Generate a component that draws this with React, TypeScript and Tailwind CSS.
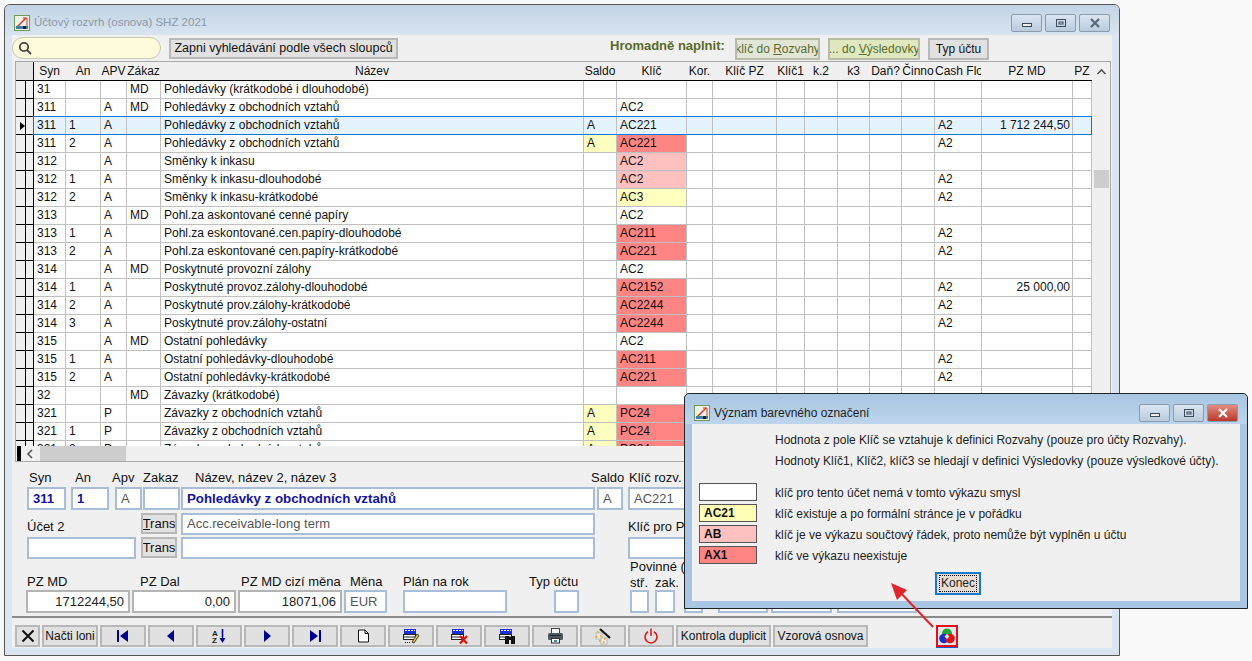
import { ReactNode } from 'react';

// column widths in the data grid, same order as the header labels
const gridCols =
  'grid grid-cols-[9px_9px_32px_35px_26px_34px_423px_33px_70px_26px_64px_28px_33px_32px_32px_33px_47px_91px_19px]';

const headers = ['Syn', 'An', 'APV', 'Zákaz', 'Název', 'Saldo', 'Klíč', 'Kor.', 'Klíč PZ', 'Klíč1', 'k.2', 'k3', 'Daň?', 'Činno', 'Cash Flo', 'PZ MD', 'PZ'];

type Tone = 'y' | 'p' | 'r' | undefined;

interface Row {
  syn: string;
  an?: string;
  apv?: string;
  zak?: string;
  name: string;
  saldo?: string;
  saldoTone?: Tone;
  key?: string;
  tone?: Tone;
  cash?: string;
  pz?: string;
  selected?: boolean;
}

const rows: Row[] = [
  { syn: '31', zak: 'MD', name: 'Pohledávky (krátkodobé i dlouhodobé)' },
  { syn: '311', apv: 'A', zak: 'MD', name: 'Pohledávky z obchodních vztahů', key: 'AC2' },
  { syn: '311', an: '1', apv: 'A', name: 'Pohledávky z obchodních vztahů', saldo: 'A', key: 'AC221', cash: 'A2', pz: '1 712 244,50', selected: true },
  { syn: '311', an: '2', apv: 'A', name: 'Pohledávky z obchodních vztahů', saldo: 'A', saldoTone: 'y', key: 'AC221', tone: 'r', cash: 'A2' },
  { syn: '312', apv: 'A', name: 'Směnky k inkasu', key: 'AC2', tone: 'p' },
  { syn: '312', an: '1', apv: 'A', name: 'Směnky k inkasu-dlouhodobé', key: 'AC2', tone: 'p', cash: 'A2' },
  { syn: '312', an: '2', apv: 'A', name: 'Směnky k inkasu-krátkodobé', key: 'AC3', tone: 'y', cash: 'A2' },
  { syn: '313', apv: 'A', zak: 'MD', name: 'Pohl.za askontované cenné papíry', key: 'AC2' },
  { syn: '313', an: '1', apv: 'A', name: 'Pohl.za eskontované.cen.papíry-dlouhodobé', key: 'AC211', tone: 'r', cash: 'A2' },
  { syn: '313', an: '2', apv: 'A', name: 'Pohl.za eskontované cen.papíry-krátkodobé', key: 'AC221', tone: 'r', cash: 'A2' },
  { syn: '314', apv: 'A', zak: 'MD', name: 'Poskytnuté provozní zálohy', key: 'AC2' },
  { syn: '314', an: '1', apv: 'A', name: 'Poskytnuté provoz.zálohy-dlouhodobé', key: 'AC2152', tone: 'r', cash: 'A2', pz: '25 000,00' },
  { syn: '314', an: '2', apv: 'A', name: 'Poskytnuté prov.zálohy-krátkodobé', key: 'AC2244', tone: 'r', cash: 'A2' },
  { syn: '314', an: '3', apv: 'A', name: 'Poskytnuté prov.zálohy-ostatní', key: 'AC2244', tone: 'r', cash: 'A2' },
  { syn: '315', apv: 'A', zak: 'MD', name: 'Ostatní pohledávky', key: 'AC2' },
  { syn: '315', an: '1', apv: 'A', name: 'Ostatní pohledávky-dlouhodobé', key: 'AC211', tone: 'r', cash: 'A2' },
  { syn: '315', an: '2', apv: 'A', name: 'Ostatní pohledávky-krátkodobé', key: 'AC221', tone: 'r', cash: 'A2' },
  { syn: '32', zak: 'MD', name: 'Závazky (krátkodobé)' },
  { syn: '321', apv: 'P', name: 'Závazky z obchodních vztahů', saldo: 'A', saldoTone: 'y', key: 'PC24', tone: 'r' },
  { syn: '321', an: '1', apv: 'P', name: 'Závazky z obchodních vztahů', saldo: 'A', saldoTone: 'y', key: 'PC24', tone: 'r' },
  { syn: '321', an: '2', apv: 'P', name: 'Závazky z obchodních vztahů', saldo: 'A', saldoTone: 'y', key: 'PC24', tone: 'r' },
];

const toneClass = (tone: Tone) => {
  if (tone === 'y') return 'bg-[#ffffc0]';
  if (tone === 'p') return 'bg-[#ffc0c0]';
  if (tone === 'r') return 'bg-[#ff8484]';
  return '';
};

const Cell = ({ children, className = '' }: { children?: ReactNode; className?: string }) => (
  <div className={`h-[18px] border-r border-b border-[#c0c0c0] pl-[3px] leading-[17px] overflow-hidden whitespace-nowrap ${className}`}>
    {children}
  </div>
);

const GridRow = ({ row }: { row: Row }) => {
  const sel = row.selected;
  const lines = sel ? 'bg-[#e5f3ff]' : '';
  return (
    <div className={`${gridCols} relative`}>
      <div className="h-[18px] border-b border-black bg-[#f0f0f0]" />
      <div className="h-[18px] border-x border-b border-black bg-[#f0f0f0] relative">
        {sel && <div className="absolute left-[-6px] top-[5px] w-0 h-0 border-y-[4px] border-y-transparent border-l-[5px] border-l-black" />}
      </div>
      <Cell className={lines}>{row.syn}</Cell>
      <Cell className={lines}>{row.an}</Cell>
      <Cell className={lines}>{row.apv}</Cell>
      <Cell className={lines}>{row.zak}</Cell>
      <Cell className={lines}>{row.name}</Cell>
      <Cell className={`${lines} ${toneClass(row.saldoTone)}`}>{row.saldo}</Cell>
      <Cell className={`${lines} ${toneClass(row.tone)}`}>{row.key}</Cell>
      <Cell className={lines} />
      <Cell className={lines} />
      <Cell className={lines} />
      <Cell className={lines} />
      <Cell className={lines} />
      <Cell className={lines} />
      <Cell className={lines} />
      <Cell className={lines}>{row.cash}</Cell>
      <Cell className={`${lines} text-right pr-[2px]`}>{row.pz}</Cell>
      <Cell className={lines} />
      {sel && <div className="absolute left-[17px] right-0 top-[-1px] h-[19px] border border-[#0078d7] pointer-events-none" />}
    </div>
  );
};

const Field = ({ className = '', children }: { className?: string; children?: ReactNode }) => (
  <div className={`h-[23px] border-2 border-[#a9bed6] bg-white px-[4px] leading-[19px] text-[13px] text-[#555] whitespace-nowrap overflow-hidden ${className}`}>
    {children}
  </div>
);

const Num = ({ className = '', children }: { className?: string; children?: ReactNode }) => (
  <div className={`h-[23px] border-2 border-[#b4b4b4] bg-white px-[4px] text-right leading-[19px] text-[13px] text-[#222] ${className}`}>
    {children}
  </div>
);

const ToolButton = ({ children, className = 'w-[46px]' }: { children?: ReactNode; className?: string }) => (
  <div className={`h-[22px] border-2 border-[#b8b8b8] bg-[#e1e1e1] flex items-center justify-center text-[12px] text-[#111] whitespace-nowrap overflow-hidden ${className}`}>
    {children}
  </div>
);

const AppIcon = () => (
  <svg width="16" height="16" viewBox="0 0 16 16">
    <rect x="0.5" y="0.5" width="15" height="15" fill="#eef3e6" stroke="#6d9a5a" />
    <path d="M2 13 L12 3" stroke="#d8342c" strokeWidth="1.5" />
    <path d="M9 3 L13 3 L13 12" stroke="#d8342c" fill="none" />
    <rect x="2" y="11" width="12" height="3" fill="#3f7fa8" />
    <rect x="9" y="11" width="3" height="3" fill="#222" />
  </svg>
);

const WinButton = ({ kind, red = false }: { kind: 'min' | 'max' | 'close'; red?: boolean }) => (
  <div
    className={`w-[31px] h-[18px] rounded-[2px] border border-[#8a9bad] flex items-center justify-center ${
      red ? 'bg-gradient-to-b from-[#e58b80] to-[#b8372a]' : 'bg-gradient-to-b from-[#dbe6f1] to-[#b9cbdd]'
    }`}
  >
    <svg width="14" height="10" viewBox="0 0 14 10">
      {kind === 'min' && <rect x="2.5" y="5.5" width="9" height="3" fill="#f2f5f8" stroke="#3d4a57" />}
      {kind === 'max' && (
        <>
          <rect x="2.5" y="1.5" width="9" height="7" fill="none" stroke="#3d4a57" />
          <rect x="5" y="4" width="4" height="2" fill="none" stroke="#3d4a57" />
        </>
      )}
      {kind === 'close' && <path d="M3 1 L11 9 M11 1 L3 9" stroke={red ? '#fff' : '#5a6876'} strokeWidth="2.2" />}
    </svg>
  </div>
);

const NavIcon = ({ d, bar }: { d: string; bar?: number }) => (
  <svg width="14" height="14" viewBox="0 0 14 14">
    <path d={d} fill="#00008b" />
    {bar !== undefined && <rect x={bar} y="1" width="2" height="12" fill="#00008b" />}
  </svg>
);

// blue-headed table used by the edit/delete/find buttons
const SheetIcon = ({ children }: { children?: ReactNode }) => (
  <svg width="18" height="17" viewBox="0 0 18 17">
    <rect x="2" y="1" width="12" height="5" fill="#1c2fd0" />
    <path d="M3 2.5 h2 M6 2.5 h2 M9 2.5 h2 M12 2.5 h1" stroke="#fff" strokeWidth="1" />
    <rect x="1.5" y="6.5" width="12" height="5" fill="#fff" stroke="#222" />
    <path d="M1 9 h13" stroke="#222" />
    {children}
  </svg>
);

const App = () => (
  <div
    className="relative w-[1252px] h-[661px] overflow-hidden bg-[#f9f9f9] pl-[4px] pt-[4px] text-[12px] text-[#111]"
    style={{ fontFamily: '"Liberation Sans", Arial, sans-serif' }}
  >
    {/* main window */}
    <div className="w-[1116px] h-[652px] border border-[#555] rounded-t-[6px] bg-[#dbe6f2] flex flex-col px-[7px] pb-[7px] overflow-hidden">
      <div className="h-[30px] -mx-[7px] px-[9px] pt-[6px] shrink-0 flex items-center bg-gradient-to-b from-[#c3d4e5] to-[#d8e4f0]">
        <AppIcon />
        <span className="ml-[4px] text-[11.5px] text-[#8a99a8]">Účtový rozvrh (osnova) SHZ 2021</span>
        <div className="ml-auto flex gap-[3px]">
          <WinButton kind="min" />
          <WinButton kind="max" />
          <WinButton kind="close" />
        </div>
      </div>

      <div className="flex-1 bg-[#f0f0f0] flex flex-col min-h-0">
        {/* search row */}
        <div className="h-[26px] shrink-0 flex items-center">
          <div className="w-[149px] h-[22px] rounded-full border border-[#c9c9b4] bg-[#fdfbdc] flex items-center pl-[5px]">
            <svg width="14" height="14" viewBox="0 0 14 14" fill="none" stroke="#444" strokeWidth="1.8">
              <circle cx="6" cy="6" r="4.2" />
              <path d="M9 9 L13 13" />
            </svg>
          </div>
          <div className="ml-[8px] w-[229px] h-[21px] border-2 border-[#b8b8b8] bg-[#e1e1e1] flex items-center justify-center text-[12.5px]">
            Zapni vyhledávání podle všech sloupců
          </div>
          <span className="ml-[212px] w-[118px] font-bold text-[#5a6a2a] text-[13px] -mt-[4px] whitespace-nowrap">Hromadně naplnit:</span>
          <div className="ml-[7px] w-[85px] h-[22px] mt-[2px] border-2 border-[#b8bca8] bg-[#e2e6d6] text-[#5b6b2d] flex items-center justify-center whitespace-nowrap overflow-hidden">
            klíč do&nbsp;<u>R</u>ozvahy
          </div>
          <div className="ml-[8px] w-[92px] h-[22px] mt-[2px] border-2 border-[#b8bca8] bg-[#dfe8bf] text-[#5b6b2d] flex items-center justify-center whitespace-nowrap overflow-hidden">
            ... do&nbsp;<u>V</u>ýsledovky
          </div>
          <div className="ml-[8px] w-[61px] h-[22px] mt-[2px] border-2 border-[#b8b8b8] bg-[#e1e1e1] flex items-center justify-center">
            Typ účtu
          </div>
        </div>

        {/* data grid */}
        <div className="ml-[3px] mr-[1px] h-[401px] shrink-0 border border-[#a8a8a8] flex flex-col bg-white overflow-hidden relative">
          <div className="flex-1 min-h-0 flex">
            <div className="w-[1076px] shrink-0 overflow-hidden">
              <div className={`${gridCols} h-[19px] border-b border-black bg-[#f0f0f0]`}>
                <div className="col-span-2 bg-[#e4e4e4] border-r border-black" />
                {headers.map((h) => (
                  <div key={h} className="text-center leading-[18px] whitespace-nowrap overflow-hidden text-[#111] border-r border-transparent">
                    {h}
                  </div>
                ))}
              </div>
              {rows.map((row, i) => (
                <GridRow key={i} row={row} />
              ))}
            </div>
            <div className="w-[18px] shrink-0 bg-[#f0f0f0] flex flex-col items-center">
              <svg width="11" height="8" viewBox="0 0 11 8" className="mt-[6px]">
                <path d="M1.5 6 L5.5 2 L9.5 6" fill="none" stroke="#555" strokeWidth="1.6" />
              </svg>
              <div className="w-[15px] h-[18px] mt-[94px] bg-[#cdcdcd]" />
            </div>
          </div>
          <div className="h-[15px] shrink-0 bg-[#f0f0f0] flex items-center relative">
            <div className="w-[4px] h-[15px] ml-[1px] bg-black" />
            <svg width="8" height="10" viewBox="0 0 8 10" className="ml-[5px]">
              <path d="M6 1 L2 5 L6 9" fill="none" stroke="#555" strokeWidth="1.6" />
            </svg>
            <div className="w-[86px] h-[15px] ml-[6px] bg-[#cdcdcd]" />
          </div>
        </div>

        {/* detail panel */}
        <div className="flex-1 min-h-0 flex flex-col border-b-2 border-[#8a8a8a] pl-[15px] text-[13px] overflow-hidden">
          <div className="flex h-[17px] mt-[7px] leading-[17px] whitespace-nowrap">
            <span className="ml-[2px] w-[46px]">Syn</span>
            <span className="w-[37px]">An</span>
            <span className="w-[31px]">Apv</span>
            <span className="w-[52px]">Zakaz</span>
            <span className="w-[396px]">Název, název 2, název 3</span>
            <span className="w-[38px]">Saldo</span>
            <span>Klíč rozv.</span>
          </div>
          <div className="flex h-[23px] mt-[1px]">
            <Field className="w-[39px] bg-[#fdfde0] font-bold text-[#14149a]">311</Field>
            <Field className="ml-[5px] w-[38px] bg-[#fdfde0] font-bold text-[#14149a]">1</Field>
            <Field className="ml-[6px] w-[27px]">A</Field>
            <Field className="ml-[1px] w-[37px]" />
            <Field className="ml-[1px] w-[414px] bg-[#fdfde0] font-bold text-[#14149a] !text-[13.3px]">Pohledávky z obchodních vztahů</Field>
            <Field className="ml-[2px] w-[26px]">A</Field>
            <Field className="ml-[5px] w-[80px]">AC221</Field>
          </div>
          <div className="flex h-[22px] mt-[3px]">
            <span className="mt-[5px] w-[114px] leading-[18px]">Účet 2</span>
            <ToolButton className="w-[36px] text-[13px] !h-[21px]">
              <span>
                <u>T</u>rans
              </span>
            </ToolButton>
            <Field className="ml-[4px] w-[414px] !h-[22px] !leading-[18px]">Acc.receivable-long term</Field>
            <span className="ml-[33px] mt-[5px] leading-[18px]">Klíč pro PZ</span>
          </div>
          <div className="flex h-[22px] mt-[2px]">
            <Field className="w-[109px] !h-[22px]" />
            <ToolButton className="ml-[5px] w-[36px] text-[13px] !h-[21px]">Trans</ToolButton>
            <Field className="ml-[4px] w-[414px] !h-[22px]" />
            <Field className="ml-[33px] w-[80px] !h-[22px]" />
          </div>
          <div className="flex items-end h-[32px] whitespace-nowrap">
            <span className="w-[113px]">PZ MD</span>
            <span className="w-[101px]">PZ Dal</span>
            <span className="w-[109px]">PZ MD cizí měna</span>
            <span className="w-[53px]">Měna</span>
            <span className="w-[126px]">Plán na rok</span>
            <span className="w-[101px]">Typ účtu</span>
            <div className="flex flex-col leading-[16px]">
              <span>Povinné (A</span>
              <div className="flex">
                <span className="w-[25px]">stř.</span>
                <span>zak.</span>
              </div>
            </div>
          </div>
          <div className="flex h-[23px] -mt-[1px] -ml-[1px]">
            <Num className="w-[104px]">1712244,50</Num>
            <Num className="ml-[2px] w-[104px]">0,00</Num>
            <Num className="ml-[2px] w-[104px]">18071,06</Num>
            <Field className="ml-[2px] w-[43px]">EUR</Field>
            <Field className="ml-[16px] w-[104px]" />
            <Field className="ml-[47px] w-[25px]" />
            <Field className="ml-[51px] w-[19px]" />
            <Field className="ml-[6px] w-[20px]" />
            <Field className="ml-[9px] w-[19px]" />
            <Field className="ml-[15px] w-[50px]" />
            <Field className="ml-[3px] w-[61px]" />
            <Field className="ml-[5px] w-[80px]" />
          </div>
        </div>

        {/* toolbar */}
        <div className="h-[30px] shrink-0 flex items-center gap-[2px] pl-[3px] pt-[7px] pb-[1px]">
          <ToolButton className="w-[25px]">
            <svg width="14" height="14" viewBox="0 0 14 14">
              <path d="M1.5 1.5 L12.5 12.5 M12.5 1.5 L1.5 12.5" stroke="#111" strokeWidth="2" />
            </svg>
          </ToolButton>
          <ToolButton className="w-[56px] text-[12.5px]">Načti loni</ToolButton>
          <ToolButton><NavIcon d="M12 1 L4 7 L12 13 Z" bar={1} /></ToolButton>
          <ToolButton><NavIcon d="M10 1 L3 7 L10 13 Z" /></ToolButton>
          <ToolButton>
            <svg width="16" height="16" viewBox="0 0 16 16">
              <text x="1" y="7.5" fontSize="8" fontWeight="bold" fill="#222" fontFamily="Liberation Sans">A</text>
              <text x="1" y="15" fontSize="8" fontWeight="bold" fill="#222" fontFamily="Liberation Sans">Z</text>
              <path d="M11.5 1 V12" stroke="#00008b" strokeWidth="1.6" />
              <path d="M8.5 10 L14.5 10 L11.5 15 Z" fill="#00008b" />
            </svg>
          </ToolButton>
          <ToolButton><NavIcon d="M4 1 L11 7 L4 13 Z" /></ToolButton>
          <ToolButton><NavIcon d="M2 1 L10 7 L2 13 Z" bar={11} /></ToolButton>
          <ToolButton>
            <svg width="13" height="14" viewBox="0 0 13 14">
              <path d="M1.5 1 H8 L11.5 4.5 V13 H1.5 Z M8 1 V4.5 H11.5" fill="#fff" stroke="#111" />
            </svg>
          </ToolButton>
          <ToolButton>
            <SheetIcon>
              <path d="M10 14 L15 6 L17 7.5 L12 15 Z" fill="#e8c030" stroke="#222" strokeWidth="0.8" />
              <path d="M3 14.5 h6" stroke="#222" strokeDasharray="1 1" />
            </SheetIcon>
          </ToolButton>
          <ToolButton>
            <SheetIcon>
              <path d="M10 8 L17 15.5 M17 8 L10 15.5" stroke="#e01010" strokeWidth="2.2" />
            </SheetIcon>
          </ToolButton>
          <ToolButton>
            <SheetIcon>
              <rect x="7" y="8" width="4" height="8" fill="#111" />
              <rect x="13" y="8" width="4" height="8" fill="#111" />
              <rect x="10" y="9" width="4" height="3" fill="#111" />
            </SheetIcon>
          </ToolButton>
          <ToolButton>
            <svg width="17" height="16" viewBox="0 0 17 16">
              <rect x="4.5" y="0.5" width="8" height="5" fill="#f4f4f4" stroke="#444" />
              <rect x="1" y="5" width="15" height="7" rx="1.5" fill="#4c5963" />
              <rect x="3" y="7" width="11" height="1" fill="#222" />
              <rect x="4.5" y="10.5" width="8" height="4.5" fill="#fff" stroke="#333" />
              <rect x="7" y="12" width="3" height="2" fill="#3a8fb0" />
            </svg>
          </ToolButton>
          <ToolButton>
            <svg width="18" height="17" viewBox="0 0 18 17">
              <rect x="2" y="5" width="6" height="6" fill="#ecebe4" stroke="#bdbdb0" />
              <rect x="7" y="10" width="6" height="6" fill="#ecebe4" stroke="#bdbdb0" />
              <path d="M6 1 L16 10" stroke="#111" strokeWidth="2.2" />
              <path d="M3 4 h1.5 M2 9 h1.5 M6 8 h1.5 M5 13 h1.5 M10 11 h1.5 M9 14 h1.5" stroke="#e8a020" strokeWidth="1.4" />
            </svg>
          </ToolButton>
          <ToolButton>
            <svg width="16" height="16" viewBox="0 0 16 16" fill="none" stroke="#d81e1e" strokeWidth="1.6">
              <path d="M5 3.8 A6 6 0 1 0 11 3.8" />
              <path d="M8 0.5 V8" />
            </svg>
          </ToolButton>
          <ToolButton className="w-[95px] text-[12.8px]">Kontrola duplicit</ToolButton>
          <ToolButton className="w-[95px] text-[12.5px]">Vzorová osnova</ToolButton>
          <div className="ml-[66px] w-[22px] h-[22px] border-2 border-[#e01020] flex items-center justify-center bg-[#e8e8e8] relative">
            <svg width="16" height="16" viewBox="0 0 16 16">
              <circle cx="8" cy="5.5" r="5" fill="#1fa838" />
              <circle cx="5" cy="10.5" r="4.8" fill="#1a2fc8" />
              <circle cx="11" cy="10.5" r="4.8" fill="#d81818" />
              <path d="M8 6 L10.5 8.5 L8 11 L5.5 8.5 Z" fill="#e8e8c0" />
            </svg>
            <div className="absolute left-[-2px] right-[-2px] bottom-[-3px] h-[1px] bg-[#1a56c0]" />
          </div>
        </div>
      </div>
    </div>

    {/* color legend dialog */}
    <div className="absolute left-[684px] top-[393px] w-[564px] h-[216px] border border-[#222] rounded-t-[5px] bg-[#a9c7e4] px-[7px] pb-[7px] flex flex-col">
      <div className="h-[30px] -mx-[7px] px-[9px] pt-[7px] shrink-0 flex items-center bg-gradient-to-b from-[#a8c5e2] to-[#bdd5ec] rounded-t-[5px]">
        <AppIcon />
        <span className="ml-[4px] text-[#222] text-[12px]">Význam barevného označení</span>
        <div className="ml-auto flex gap-[3px]">
          <WinButton kind="min" />
          <WinButton kind="max" />
          <WinButton kind="close" red />
        </div>
      </div>
      <div className="flex-1 bg-[#f0f0f0] pl-[7px] flex flex-col text-[12px] text-[#222]">
        <p className="ml-[76px] mt-[8px] leading-[16px]">Hodnota z pole Klíč se vztahuje k definici Rozvahy (pouze pro účty Rozvahy).</p>
        <p className="ml-[76px] mt-[5px] leading-[16px]">Hodnoty Klíč1, Klíč2, klíč3 se hledají v definici Výsledovky (pouze výsledkové účty).</p>
        <div className="flex flex-col gap-[3px] mt-[14px]">
          {[
            { label: '', bg: 'bg-white', text: 'klíč pro tento účet nemá v tomto výkazu smysl' },
            { label: 'AC21', bg: 'bg-[#ffffb8]', text: 'klíč existuje a po formální stránce je v pořádku' },
            { label: 'AB', bg: 'bg-[#ffc0c0]', text: 'klíč je ve výkazu součtový řádek, proto nemůže být vyplněn u účtu' },
            { label: 'AX1', bg: 'bg-[#ff8484]', text: 'klíč ve výkazu neexistuje' },
          ].map((s) => (
            <div key={s.text} className="flex items-center h-[18px]">
              <div className={`w-[58px] h-[18px] border border-[#555] pl-[4px] font-bold text-[#111] leading-[17px] ${s.bg}`}>{s.label}</div>
              <span className="ml-[18px] pt-[2px]">{s.text}</span>
            </div>
          ))}
        </div>
        <div className="mt-[8px] ml-[236px] w-[46px] h-[23px] border-2 border-[#1a78c8] bg-[#e8ddd3] flex items-center justify-center">
          <span className="border border-dotted border-black px-[1px] leading-[15px]">Konec</span>
        </div>
      </div>
    </div>

    {/* arrow from the colour button to the dialog */}
    <svg className="absolute left-[880px] top-[575px] pointer-events-none" width="60" height="60" viewBox="0 0 60 60">
      <path d="M53 52 L19 16" stroke="#e0252d" strokeWidth="2" />
      <path d="M11 8 L27 15 L17 25 Z" fill="#e0252d" />
    </svg>
  </div>
);

export default App;
